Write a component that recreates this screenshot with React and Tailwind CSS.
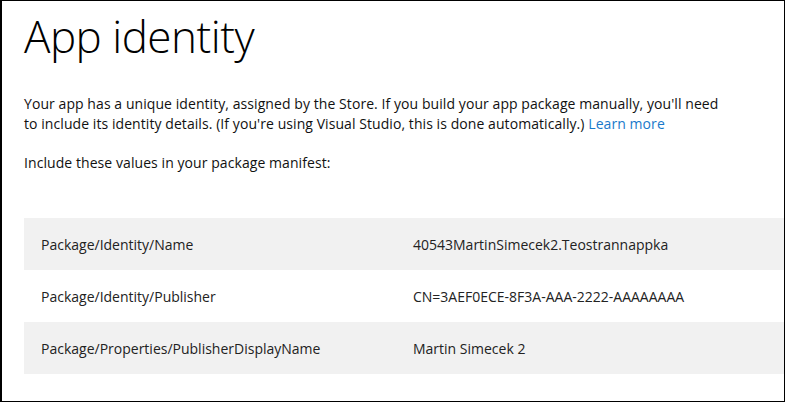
export default function App() {
  const rows = [
    ["Package/Identity/Name", "40543MartinSimecek2.Teostrannappka", true],
    ["Package/Identity/Publisher", "CN=3AEF0ECE-8F3A-AAA-2222-AAAAAAAA", false],
    ["Package/Properties/PublisherDisplayName", "Martin Simecek 2", true],
  ];
  return (
    <div
      className="w-[785px] h-[402px] bg-white border border-black border-l-2 overflow-hidden text-black"
      style={{ fontFamily: '"Open Sans", "Noto Sans", sans-serif' }}
    >
      <div className="pl-[22px]">
        <h1 className="text-[44px] font-light leading-[52px] pt-[9px] tracking-[-0.5px]">App identity</h1>
        <p className="mt-[32px] text-[14px] leading-[20px] tracking-[0.07px] text-[#111]">
          Your app has a unique identity, assigned by the Store. If you build your app package manually, you'll need
          <br />
          to include its identity details. (If you're using Visual Studio, this is done automatically.){" "}
          <span className="text-[#1979ca]">Learn more</span>
        </p>
        <p className="mt-[19px] text-[14px] leading-[20px] tracking-[0.07px] text-[#111]">Include these values in your package manifest:</p>
        <div className="mt-[45px]">
          {rows.map(([k, v, gray]) => (
            <div key={k} className={`flex items-center h-[52px] text-[14px] text-[#222] ${gray ? "bg-[#f1f1f1]" : "bg-white"}`}>
              <div className="pl-[17px] w-[389px] shrink-0">{k}</div>
              <div>{v}</div>
            </div>
          ))}
        </div>
      </div>
    </div>
  );
}
